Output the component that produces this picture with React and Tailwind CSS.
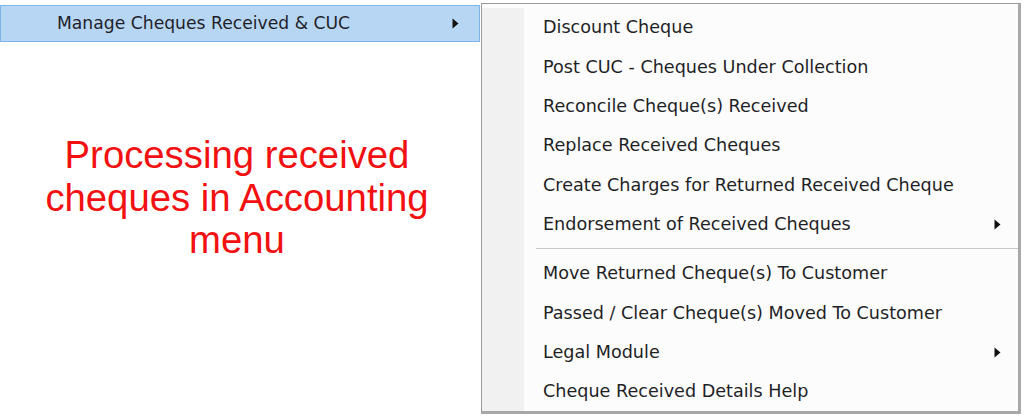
const items = [
  { label: 'Discount Cheque' },
  { label: 'Post CUC - Cheques Under Collection' },
  { label: 'Reconcile Cheque(s) Received' },
  { label: 'Replace Received Cheques' },
  { label: 'Create Charges for Returned Received Cheque' },
  { label: 'Endorsement of Received Cheques', sub: true },
  { separator: true },
  { label: 'Move Returned Cheque(s) To Customer' },
  { label: 'Passed / Clear Cheque(s) Moved To Customer' },
  { label: 'Legal Module', sub: true },
  { label: 'Cheque Received Details Help' },
];

function Arrow() {
  return (
    <svg width="7" height="11" viewBox="0 0 7 11" className="shrink-0">
      <path d="M0.5 0.5 L6.5 5.5 L0.5 10.5 Z" fill="#111" />
    </svg>
  );
}

function MenuRow({ item }) {
  if (item.separator) {
    return (
      <div className="flex h-[10px] items-center">
        <div className="w-[42px] self-stretch bg-[#f1f1f1]" />
        <div className="ml-[12px] flex-1">
          <div className="h-px bg-[#c5c5c5]" />
          <div className="h-px bg-white" />
        </div>
      </div>
    );
  }
  return (
    <div className="flex h-[39.3px] items-center">
      <div className="w-[42px] self-stretch bg-[#f1f1f1]" />
      <div className="ml-[19px] flex-1 text-[#1f1f26]">{item.label}</div>
      {item.sub && (
        <div className="mr-[17px]">
          <Arrow />
        </div>
      )}
    </div>
  );
}

export default function App() {
  return (
    <div className="h-[416px] w-[1024px] overflow-hidden bg-white font-['DejaVu_Sans',sans-serif] text-[17.6px]">
      <div className="flex">
        <div className="w-[480px] shrink-0 pt-[5px]">
          <div className="flex h-[37px] items-center border border-[#7eb4e8] bg-[#b7d6f4] pl-[56px] pr-[20px] text-[17.2px] text-[#1f1f2a]">
            <span className="flex-1">Manage Cheques Received &amp; CUC</span>
            <Arrow />
          </div>
          <div className="mt-[92px] pr-[6px] text-center font-['Liberation_Sans',Arial,sans-serif] text-[38.3px] leading-[42.5px] text-[#f21010]">
            Processing received
            <br />
            cheques in Accounting
            <br />
            menu
          </div>
        </div>
        <div className="ml-[1px] mt-[3px] h-[411px] w-[540px] border border-[#9a9a9a] border-r-[3px] border-b-[3px] border-r-[#a8a8a8] border-b-[#a8a8a8] bg-[#fcfcfc] pt-[4px]">
          {items.map((item, i) => (
            <MenuRow key={i} item={item} />
          ))}
        </div>
      </div>
    </div>
  );
}
